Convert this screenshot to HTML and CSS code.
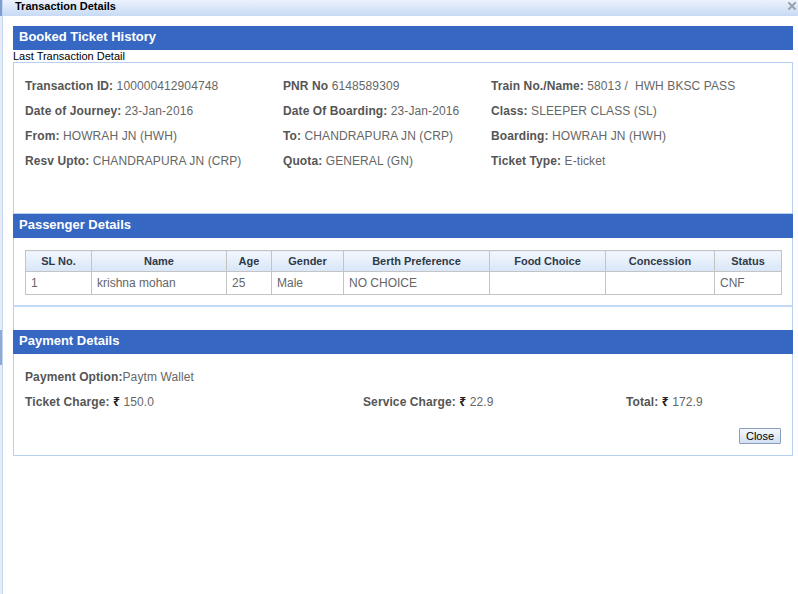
FILE: index.html
```html
<!DOCTYPE html>
<html>
<head>
<meta charset="utf-8">
<title>Transaction Details</title>
<link rel="stylesheet" href="styles.css">
</head>
<body>
<div class="page">
  <div class="edge"></div>
  <div class="dialog">
    <div class="titlebar">
      <span class="title">Transaction Details</span>
      <svg class="close-x" width="8" height="8" viewBox="0 0 8 8"><path d="M1 1 L7 7 M7 1 L1 7" stroke="#9aa3ad" stroke-width="2" stroke-linecap="square"/></svg>
    </div>
    <div class="content">
      <div class="bar">Booked Ticket History</div>
      <div class="caption">Last Transaction Detail</div>
      <div class="box info">
        <div class="grid3">
          <div class="field"><b>Transaction ID:</b> 100000412904748</div>
          <div class="field"><b>PNR No</b> 6148589309</div>
          <div class="field"><b>Train No./Name:</b> 58013 /&nbsp; HWH BKSC PASS</div>
          <div class="field"><b>Date of Journey:</b> 23-Jan-2016</div>
          <div class="field"><b>Date Of Boarding:</b> 23-Jan-2016</div>
          <div class="field"><b>Class:</b> SLEEPER CLASS (SL)</div>
          <div class="field"><b>From:</b> HOWRAH JN (HWH)</div>
          <div class="field"><b>To:</b> CHANDRAPURA JN (CRP)</div>
          <div class="field"><b>Boarding:</b> HOWRAH JN (HWH)</div>
          <div class="field"><b>Resv Upto:</b> CHANDRAPURA JN (CRP)</div>
          <div class="field"><b>Quota:</b> GENERAL (GN)</div>
          <div class="field"><b>Ticket Type:</b> E-ticket</div>
        </div>
      </div>
      <div class="bar">Passenger Details</div>
      <div class="box pax">
        <table class="ptable">
          <colgroup>
            <col class="c1"><col class="c2"><col class="c3"><col class="c4"><col class="c5"><col class="c6"><col class="c7"><col class="c8">
          </colgroup>
          <thead>
            <tr><th>SL No.</th><th>Name</th><th>Age</th><th>Gender</th><th>Berth Preference</th><th>Food Choice</th><th>Concession</th><th>Status</th></tr>
          </thead>
          <tbody>
            <tr><td>1</td><td>krishna mohan</td><td>25</td><td>Male</td><td>NO CHOICE</td><td></td><td></td><td>CNF</td></tr>
          </tbody>
        </table>
      </div>
      <div class="box spacer"></div>
      <div class="bar">Payment Details</div>
      <div class="box pay">
        <div class="field"><b>Payment Option:</b>Paytm Wallet</div>
        <div class="grid-pay">
          <div class="field"><b>Ticket Charge: <span class="rs">₹</span></b> 150.0</div>
          <div class="field"><b>Service Charge: <span class="rs">₹</span></b> 22.9</div>
          <div class="field"><b>Total: <span class="rs">₹</span></b> 172.9</div>
        </div>
        <div class="actions"><button class="btn">Close</button></div>
      </div>
    </div>
  </div>
</div>
</body>
</html>
```
FILE: styles.css
```css
* { box-sizing: border-box; }
html, body { margin: 0; padding: 0; background: #fff; }
body { font-family: "Liberation Sans", Arial, sans-serif; }

.page { display: flex; width: 798px; height: 594px; overflow: hidden; }

.edge {
  width: 2px; flex: none;
  background: linear-gradient(to bottom, #7f9cd0 0, #7f9cd0 16px, #e6ecf5 16px, #e6ecf5 330px, #8ea9d6 330px, #8ea9d6 365px, #e6ecf5 365px);
}

.dialog { flex: 1; border-left: 1px solid #c3d6f0; display: flex; flex-direction: column; }

.titlebar {
  height: 16px; flex: none;
  background: linear-gradient(to bottom, #ecf2fc, #c7daf5);
  display: flex; align-items: flex-start; justify-content: space-between;
  padding: 0 2px 0 12px;
}
.title { font-weight: bold; font-size: 11px; line-height: 12px; color: #000; }
.close-x { margin-top: 2px; }

.content { padding: 10px 2px 0 10px; width: 792px; }

.bar {
  height: 24px; line-height: 22px;
  background: #3667c2; color: #fff;
  font-weight: bold; font-size: 13px;
  padding-left: 6px;
}

.caption { font-size: 11px; line-height: 12px; color: #000; }

.box { border-left: 1px solid #b7cff0; border-right: 1px solid #b7cff0; }

.info { border-top: 1px solid #b7cff0; border-bottom: 1px solid #b7cff0; height: 152px; padding: 11px 0 0 11px; }
.grid3 { display: grid; grid-template-columns: 258px 208px 1fr; }

.field { font-size: 12px; line-height: 25px; height: 25px; color: #666; white-space: nowrap; letter-spacing: 0.1px; }
.field b { color: #555; font-weight: bold; }
.rs { font-family: "Noto Sans", "DejaVu Sans", sans-serif; color: #222; font-size: 12px; line-height: 12px; }

.pax { padding: 12px 11px 10px 11px; border-bottom: 2px solid #c3d8f3; }
.ptable { border-collapse: collapse; width: 756px; table-layout: fixed; }
.ptable .c1 { width: 66px; }
.ptable .c2 { width: 135px; }
.ptable .c3 { width: 45px; }
.ptable .c4 { width: 72px; }
.ptable .c5 { width: 146px; }
.ptable .c6 { width: 116px; }
.ptable .c7 { width: 109px; }
.ptable .c8 { width: 67px; }
.ptable th, .ptable td { border: 1px solid #c4c4c4; padding: 0 5px; }
.ptable th {
  height: 21px; font-size: 11px; font-weight: bold; color: #2f3a48; text-align: center;
  background: linear-gradient(to bottom, #f3f7fd, #d8e6f8);
}
.ptable td { height: 23px; font-size: 12px; color: #666; text-align: left; }

.spacer { height: 23px; }

.pay { border-bottom: 1px solid #b7cff0; padding: 11px 11px 11px 11px; }
.grid-pay { display: grid; grid-template-columns: 338px 263px 1fr; }
.actions { display: flex; justify-content: flex-end; margin-top: 13px; }
.btn {
  font-family: "Liberation Sans", Arial, sans-serif; font-size: 11px; line-height: 12px;
  width: 42px; height: 16px; padding: 0; color: #000;
  border: 1px solid #8a9fbd; border-radius: 1px;
  background: linear-gradient(to bottom, #f4f8fd, #d2e0f3);
}
```
